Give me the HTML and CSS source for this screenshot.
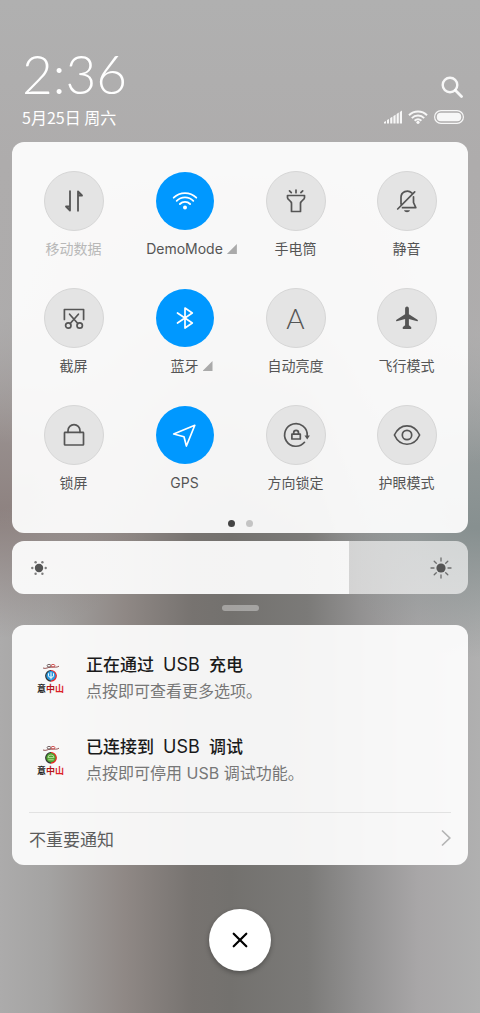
FILE: index.html
```html
<!DOCTYPE html>
<html lang="zh-CN">
<head>
    <meta charset="UTF-8">
    <meta name="viewport" content="width=device-width, initial-scale=1.0">
    <title>控制中心</title>
    <link rel="stylesheet" href="styles.css">
</head>
<body>
    <header class="status-header">
        <div>
            <div class="clock">2:36</div>
            <div class="date">5月25日 周六</div>
        </div>
        <div class="status-side">
            <button class="search-btn" aria-label="搜索">
                <svg width="22" height="22" viewBox="0 0 22 22" fill="none" stroke="currentColor" stroke-width="2.4" stroke-linecap="round"><circle cx="9" cy="9" r="7.3"/><path d="M14.3 14.3L20.5 20.5" stroke-width="2.8"/></svg>
            </button>
            <div class="status-icons">
                <svg width="18" height="14" viewBox="0 0 18 14" fill="currentColor"><path d="M0 13.5V12l2-1v2.5zM3 13.5V10l2-1v4.500zM6.200 13.500V8l2.200-1.200v6.700zM9.400 13.500V6l2.200-1.200v8.700zM12.600 13.500V4l2.200-1.400v10.900zM15.800 13.500V2L18 .5v13z"/></svg>
                <svg width="20" height="14" viewBox="0 0 20 14" fill="none" stroke="currentColor" stroke-width="2"><path d="M1 5.200A13 13 0 0 1 19 5.200M3.800 8.100A9 9 0 0 1 16.200 8.100M6.600 10.800A5.200 5.200 0 0 1 13.400 10.800"/><circle cx="10" cy="12.300" r="1.600" fill="currentColor" stroke="none"/></svg>
                <svg width="30" height="14" viewBox="0 0 30 14" fill="none" stroke="currentColor"><rect x=".6" y=".6" width="28.800" height="12.800" rx="6.400" stroke-width="1.200"/><rect x="2.800" y="2.800" width="24.400" height="8.400" rx="4" fill="currentColor" stroke="none"/></svg>
            </div>
        </div>
    </header>

    <main class="panel">
        <section class="card toggles">
            <div class="tile-grid">
                <button class="tile disabled">
                    <span class="tile-icon"><svg viewBox="0 0 30 30"><path d="M11 5.200V24.500L7 20.500h4M19 24.800V5.500L23 9.500h-4" stroke-width="1.800"/></svg></span>
                    <span class="tile-label">移动数据</span>
                </button>
                <button class="tile active">
                    <span class="tile-icon"><svg viewBox="0 0 30 30"><path d="M3.700 11.700A16 16 0 0 1 26.300 11.700M6.700 14.900A11.500 11.500 0 0 1 23.300 14.900M9.900 18A7.200 7.200 0 0 1 20.100 18" stroke-width="1.800"/><circle class="solid" cx="15" cy="21.500" r="2"/></svg></span>
                    <span class="tile-label more">DemoMode</span>
                </button>
                <button class="tile">
                    <span class="tile-icon"><svg viewBox="0 0 30 30"><path d="M6.500 9.500h17v2.200c0 2.300-4 2.600-4 5.800v8h-9v-8c0-3.200-4-3.500-4-5.800zM15 4v2.700M8.500 4.800l1.800 1.900M21.700 4.800l-1.800 1.900"/></svg></span>
                    <span class="tile-label">手电筒</span>
                </button>
                <button class="tile">
                    <span class="tile-icon"><svg viewBox="0 0 30 30"><path d="M9 18v-6.500A6.300 6.300 0 0 1 19.700 6.900M22.700 5.900L5.700 23M21.500 10.800V16.500L23.800 21.700H10.500"/><path class="solid" d="M12 24.200h6c-.6 2.600-5.400 2.600-6 0z"/></svg></span>
                    <span class="tile-label">静音</span>
                </button>
                <button class="tile">
                    <span class="tile-icon"><svg viewBox="0 0 30 30"><path d="M5.400 16.500V6.500h19.200v10M10.600 11.200L18.800 20.500M19.400 11.200L11.200 20.500"/><circle cx="9.300" cy="22.500" r="2.700"/><circle cx="20.700" cy="22.500" r="2.700"/></svg></span>
                    <span class="tile-label">截屏</span>
                </button>
                <button class="tile active">
                    <span class="tile-icon"><svg viewBox="0 0 30 30"><path d="M7.500 10L22.300 20L15 25V5L22.300 10L7.500 20"/></svg></span>
                    <span class="tile-label more">蓝牙</span>
                </button>
                <button class="tile">
                    <span class="tile-icon letter">A</span>
                    <span class="tile-label">自动亮度</span>
                </button>
                <button class="tile">
                    <span class="tile-icon"><svg viewBox="0 0 30 30"><path class="solid" d="M15 3.600c1.200 0 1.900 1 1.900 2.200v5.400l8.600 5.600c.7.500.6 1.800-.3 1.500L16.900 16v6.300l1.900 1.400c.7.500.8 2.200-.1 2.200h-7.400c-.9 0-.8-1.700-.1-2.200l1.900-1.400V16l-8.300 2.300c-.9.300-1-1-.3-1.500l8.600-5.600V5.800c0-1.200.7-2.200 1.900-2.200z"/></svg></span>
                    <span class="tile-label">飞行模式</span>
                </button>
                <button class="tile">
                    <span class="tile-icon"><svg viewBox="0 0 30 30"><rect x="5.500" y="12.300" width="19" height="12.700" rx=".6"/><path d="M9 12.300V10.700a6 6 0 0 1 12 0v1.600"/></svg></span>
                    <span class="tile-label">锁屏</span>
                </button>
                <button class="tile active">
                    <span class="tile-icon"><svg viewBox="0 0 30 30"><path d="M24.800 5.300L16.400 26L14 16.800L3.700 14z"/></svg></span>
                    <span class="tile-label">GPS</span>
                </button>
                <button class="tile">
                    <span class="tile-icon"><svg viewBox="0 0 30 30"><path d="M23.500 22.300A11.300 11.300 0 1 1 26.200 15.500"/><path class="solid" d="M23.500 15.600h5.400L26.200 19.600z"/><rect x="10.900" y="14.200" width="8.400" height="4.800"/><path d="M12.700 14.200v-1.400a2.400 2.400 0 0 1 4.800 0v1.400"/></svg></span>
                    <span class="tile-label">方向锁定</span>
                </button>
                <button class="tile">
                    <span class="tile-icon"><svg viewBox="0 0 30 30"><path d="M2.400 15C8 2.700 22 2.700 27.600 15C22 27.300 8 27.300 2.400 15z"/><circle cx="15" cy="15" r="4.700"/></svg></span>
                    <span class="tile-label">护眼模式</span>
                </button>
            </div>
            <div class="pager">
                <span class="dot current"></span>
                <span class="dot"></span>
            </div>
        </section>

        <div class="brightness">
            <input type="range" class="slider" min="0" max="100" value="74" aria-label="亮度">
            <svg class="sun low" viewBox="0 0 22 22" fill="currentColor"><circle cx="11" cy="11" r="4.200"/><g opacity=".75"><circle cx="4.300" cy="11" r="1.200"/><circle cx="17.700" cy="11" r="1.200"/><circle cx="7.600" cy="5.200" r="1.200"/><circle cx="14.400" cy="5.200" r="1.200"/><circle cx="7.600" cy="16.800" r="1.200"/><circle cx="14.400" cy="16.800" r="1.200"/></g></svg>
            <svg class="sun high" viewBox="0 0 22 22" fill="currentColor"><circle cx="11" cy="11" r="4.600"/><path d="M11 1v3M11 18v3M1 11h3M18 11h3M4.200 4.200l2.100 2.100M15.700 15.700l2.100 2.100M4.200 17.800l2.100-2.100M15.700 6.300l2.100-2.100" stroke="currentColor" stroke-width="1.300" stroke-linecap="round" opacity=".8"/></svg>
        </div>

        <div class="handle"></div>

        <section class="card notifications">
            <article class="notice">
                <svg class="notice-icon" viewBox="0 -1 30 32">
                    <path d="M7 5c3 1.300 5-1 8-.8M23 3.200c-2.500 1.800-5 .4-8 1" fill="none" stroke="#955" stroke-width="1"/>
                    <ellipse cx="13" cy="2.700" rx="1.900" ry="1.300" fill="none" stroke="#655" stroke-width=".9"/>
                    <ellipse cx="17" cy="2.700" rx="1.900" ry="1.300" fill="none" stroke="#c44" stroke-width=".9"/>
                    <circle cx="15" cy="12.800" r="5.300" fill="#2a9ae0"/>
                    <path d="M15 7.500a5.300 5.300 0 0 0 0 10.600" fill="none" stroke="#333" stroke-width="1.200"/>
                    <path d="M15 7.500a5.300 5.300 0 0 1 0 10.600" fill="none" stroke="#e22" stroke-width="1.200"/>
                    <path d="M15 9.300v7M12.500 10.300v2.500q0 1.500 2.500 1.500t2.500-1.500v-2.500" fill="none" stroke="#fff" stroke-width="1"/>
                    <text class="brush" x="1" y="29">意<tspan fill="#b3161b">中</tspan><tspan fill="#dc2127">山</tspan></text>
                </svg>
                <div>
                    <h2 class="notice-title">正在通过&nbsp; <span class="latin">USB</span>&nbsp; 充电</h2>
                    <p class="notice-text">点按即可查看更多选项。</p>
                </div>
            </article>
            <article class="notice">
                <svg class="notice-icon" viewBox="0 -1 30 32">
                    <path d="M7 5c3 1.300 5-1 8-.8M23 3.200c-2.500 1.800-5 .4-8 1" fill="none" stroke="#955" stroke-width="1"/>
                    <ellipse cx="13" cy="2.700" rx="1.900" ry="1.300" fill="none" stroke="#655" stroke-width=".9"/>
                    <ellipse cx="17" cy="2.700" rx="1.900" ry="1.300" fill="none" stroke="#c44" stroke-width=".9"/>
                    <circle cx="15" cy="12.800" r="5.300" fill="#4fa52f"/>
                    <path d="M15 7.500a5.300 5.300 0 0 0 0 10.600" fill="none" stroke="#333" stroke-width="1.200"/>
                    <path d="M15 7.500a5.300 5.300 0 0 1 0 10.600" fill="none" stroke="#e22" stroke-width="1.200"/>
                    <path d="M12 12.600a3 2.600 0 0 1 6 0zM12.300 14.800h5.400" fill="none" stroke="#b5dd9c" stroke-width="1"/>
                    <text class="brush" x="1" y="29">意<tspan fill="#b3161b">中</tspan><tspan fill="#dc2127">山</tspan></text>
                </svg>
                <div>
                    <h2 class="notice-title">已连接到&nbsp; <span class="latin">USB</span>&nbsp; 调试</h2>
                    <p class="notice-text">点按即可停用 USB 调试功能。</p>
                </div>
            </article>
            <a class="unimportant" href="#">
                <span>不重要通知</span>
                <svg width="10" height="18" viewBox="0 0 10 18" fill="none" stroke="#b4b4b4" stroke-width="1.700"><path d="M1 1.500L8.800 9L1 16.500"/></svg>
            </a>
        </section>
    </main>

    <button class="close-btn" aria-label="清除通知">
        <svg width="16" height="16" viewBox="0 0 16 16" fill="none" stroke="#000" stroke-width="2.200" stroke-linecap="round"><path d="M1.700 1.700L14.300 14.300M14.300 1.700L1.700 14.300"/></svg>
    </button>
</body>
</html>
```
FILE: styles.css
```css
* {
    margin: 0;
    padding: 0;
    box-sizing: border-box;
}

body {
    min-height: 100vh;
    padding: 0 12px;
    display: flex;
    flex-direction: column;
    font-family: Inter, "Noto Sans CJK SC", sans-serif;
    color: #555;
    background:
        linear-gradient(#b0b0b0 0%, #aeacac 16%, rgba(174,172,172,0.8) 30%, rgba(174,172,172,0) 52%),
        radial-gradient(ellipse 34% 16% at 0% 47%, #8c807e 20%, rgba(140,128,126,0) 100%),
        radial-gradient(ellipse 34% 16% at 100% 49%, #879090 20%, rgba(135,144,144,0) 100%),
        linear-gradient(90deg, #acabab 0%, #a4a3a2 10%, #8f8885 26%, #777370 40%, #73716e 48%, #7b7a78 64%, #929191 75%, #a8a6a7 87%, #b0b0b0 100%);
}

button {
    border: none;
    background: none;
    font: inherit;
    color: inherit;
    cursor: pointer;
}

svg {
    display: block;
}

.status-header {
    padding: 42px 4px 14px 10px;
    display: flex;
    justify-content: space-between;
    align-items: flex-end;
    color: #fff;
}

.clock {
    font-family: Lato, sans-serif;
    font-size: 53px;
    font-weight: 300;
    line-height: 64px;
}

.date {
    font-family: "Noto Sans CJK SC", sans-serif;
    font-size: 16px;
    line-height: 22px;
}

.status-side {
    display: flex;
    flex-direction: column;
    align-items: flex-end;
    gap: 12px;
    padding-bottom: 4px;
    color: rgba(255,255,255,0.9);
}

.search-btn {
    padding-right: 1px;
}

.status-icons {
    display: flex;
    gap: 6px;
}

.panel {
    display: flex;
    flex-direction: column;
}

.card {
    background: rgba(255,255,255,0.92);
    border-radius: 12px;
}

.toggles {
    padding: 29px 6px 6px;
}

.tile-grid {
    display: grid;
    grid-template-columns: repeat(4, 1fr);
    row-gap: 29px;
}

.tile {
    display: flex;
    flex-direction: column;
    align-items: center;
    gap: 8px;
}

.tile-icon {
    width: 60px;
    height: 60px;
    border-radius: 50%;
    border: 1px solid #d6d6d6;
    background: #e4e4e4;
    display: flex;
    align-items: center;
    justify-content: center;
}

.tile-icon svg {
    width: 30px;
    height: 30px;
    fill: none;
    stroke: currentColor;
    stroke-width: 1.7;
    stroke-linecap: round;
    stroke-linejoin: round;
}

.tile-icon .solid {
    fill: currentColor;
    stroke: none;
}

.letter {
    font-family: Lato, sans-serif;
    font-size: 28px;
    font-weight: 300;
}

.tile.active .tile-icon {
    width: 58px;
    height: 58px;
    margin: 1px;
    border: none;
    background: #0098ff;
    color: #fff;
}

.tile-label {
    font-size: 14px;
    line-height: 20px;
    white-space: nowrap;
}

.tile.disabled .tile-label {
    color: #b8b8b8;
}

/* corner mark on tiles that open a detail list */
.more::after {
    content: "";
    display: inline-block;
    width: 10px;
    height: 10px;
    margin-left: 4px;
    margin-right: -14px;
    background: #aaa;
    clip-path: polygon(100% 0, 100% 100%, 0 100%);
}

.pager {
    margin-top: 27px;
    display: flex;
    justify-content: center;
    gap: 11px;
}

.dot {
    width: 7px;
    height: 7px;
    border-radius: 50%;
    background: #c4c4c4;
}

.dot.current {
    background: #444;
}

.brightness {
    position: relative;
    margin-top: 8px;
}

.slider {
    display: block;
    width: 100%;
    height: 53px;
    border-radius: 12px;
    appearance: none;
    background: linear-gradient(90deg, rgba(255,255,255,0.92) 74%, rgba(255,255,255,0.62) 74%);
}

.slider::-webkit-slider-thumb {
    appearance: none;
    width: 1px;
    height: 53px;
}

.sun {
    position: absolute;
    top: 16px;
    width: 22px;
    height: 22px;
    color: #555;
    pointer-events: none;
}

.low {
    left: 16px;
}

.high {
    right: 16px;
}

.handle {
    width: 37px;
    height: 6px;
    margin: 11px auto 14px;
    border-radius: 3px;
    background: rgba(255,255,255,0.35);
}

.notifications {
    padding: 27px 17px 0;
}

.notice {
    display: flex;
    align-items: center;
    gap: 20px;
    padding-left: 7px;
    margin-bottom: 30px;
}

.notice:nth-child(2) {
    margin-bottom: 26px;
}

.notice-icon {
    width: 30px;
    height: 32px;
}

.brush {
    font-family: "Noto Sans CJK SC", sans-serif;
    font-size: 9px;
    font-weight: 700;
    fill: #222;
}

.notice-title {
    font-size: 17px;
    font-weight: 500;
    line-height: 26px;
    color: #1a1a1a;
}

.latin {
    font-size: 18px;
    font-weight: 400;
}

.notice-text {
    font-size: 16px;
    line-height: 26px;
    color: #777;
}

.unimportant {
    height: 53px;
    padding-bottom: 2px;
    display: flex;
    align-items: center;
    justify-content: space-between;
    border-top: 1px solid #e2e2e2;
    font-size: 17px;
    color: #5c5c5c;
    text-decoration: none;
}

.close-btn {
    width: 62px;
    height: 62px;
    margin: 44px auto 42px;
    border-radius: 50%;
    background: #fff;
    box-shadow: 0 2px 5px rgba(0,0,0,0.3);
    display: flex;
    align-items: center;
    justify-content: center;
}
```
